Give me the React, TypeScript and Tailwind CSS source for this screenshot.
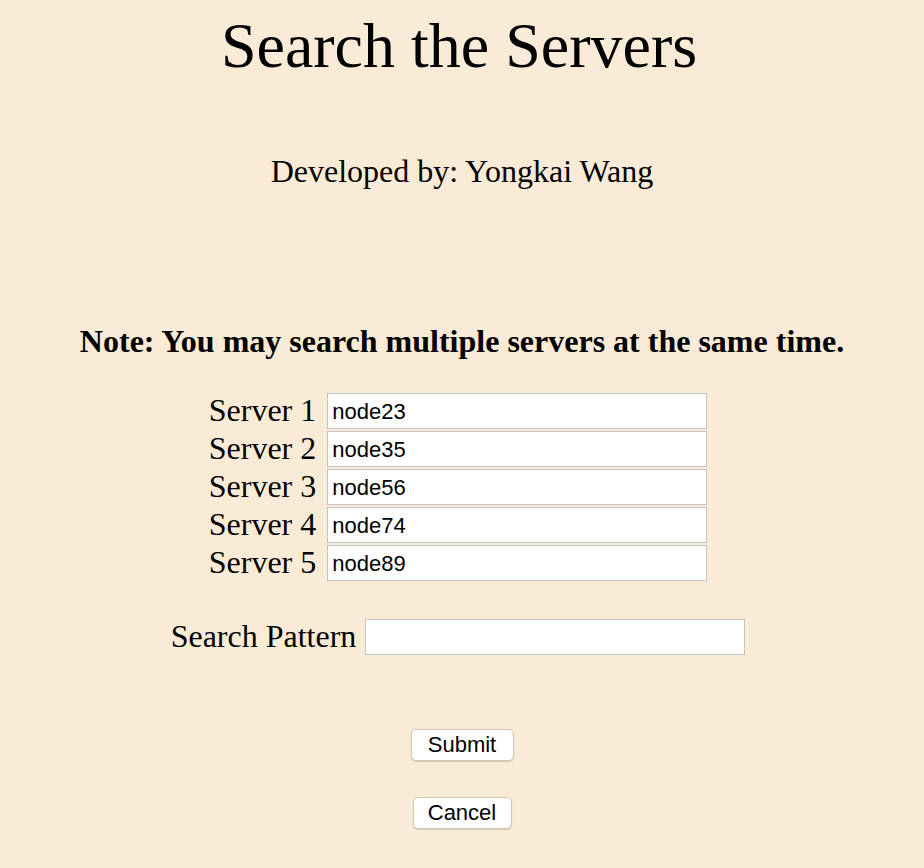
export default function App() {
  const servers = ["node23", "node35", "node56", "node74", "node89"]

  return (
    <div className="min-h-[868px] w-full bg-[#faebd7] text-black font-['Liberation_Serif',serif]">
      <div className="flex flex-col items-center">
        {/* Header */}
        <h1 className="mt-[8px] pr-[6px] text-[64px] leading-[76px]">Search the Servers</h1>
        <p className="mt-[68px] text-[32px] leading-[38px]">Developed by: Yongkai Wang</p>

        <p className="mt-[133px] text-[32px] leading-[36px] font-bold">
          Note: You may search multiple servers at the same time.
        </p>

        {/* Server inputs */}
        <div className="mt-[34px] pr-[8px] flex flex-col gap-[2px]">
          {servers.map((s, i) => (
            <div key={s} className="flex items-center gap-[11px]">
              <span className="text-[32px] leading-[36px] -translate-y-[1px]">Server {i + 1}</span>
              <input
                defaultValue={s}
                className="h-[36px] w-[380px] bg-white border border-[#c4c4c4] pl-[4px] pt-[2px] text-[22px] font-['Liberation_Sans',sans-serif] outline-none"
              />
            </div>
          ))}
        </div>

        <div className="mt-[38px] pr-[8px] flex items-center gap-[9px]">
          <span className="text-[32px] leading-[36px] -translate-y-[1px]">Search Pattern</span>
          <input className="h-[36px] w-[380px] bg-white border border-[#c4c4c4] pl-[4px] text-[22px] font-['Liberation_Sans',sans-serif] outline-none" />
        </div>

        {/* Buttons */}
        <button className="mt-[74px] h-[32px] w-[103px] rounded-[5px] bg-white border border-[#d2c6b6] shadow-[0_1px_1px_rgba(0,0,0,0.15)] text-[22px] leading-[30px] font-['Liberation_Sans',sans-serif]">
          Submit
        </button>
        <button className="mt-[36px] h-[32px] w-[99px] rounded-[5px] bg-white border border-[#d2c6b6] shadow-[0_1px_1px_rgba(0,0,0,0.15)] text-[22px] leading-[30px] font-['Liberation_Sans',sans-serif]">
          Cancel
        </button>
      </div>
    </div>
  )
}
